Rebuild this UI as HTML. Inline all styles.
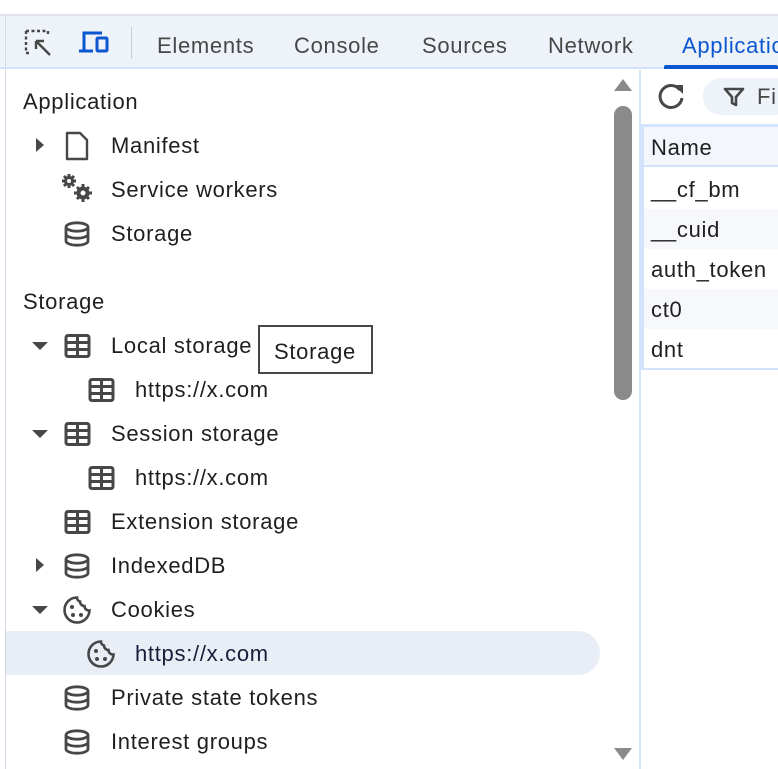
<!DOCTYPE html>
<html><head><meta charset="utf-8"><style>
*{margin:0;padding:0;box-sizing:border-box}
body{width:778px;height:769px;overflow:hidden;background:#fff;font-family:"Liberation Sans","DejaVu Sans",sans-serif;color:#1f1f1f;position:relative;letter-spacing:0.7px}
.a{position:absolute;white-space:nowrap}
.t{font-size:22px;line-height:44px;height:44px}
svg.i{position:absolute}
</style></head><body>
<svg width="0" height="0" style="position:absolute"><defs>
<symbol id="db" viewBox="0 0 26 26"><g fill="none" stroke="#474747" stroke-width="2.8"><ellipse cx="13" cy="6" rx="11" ry="4.2"/><path d="M2 6v14c0 2.4 5 4.2 11 4.2s11-1.8 11-4.2V6M2 13c0 2.4 5 4.2 11 4.2s11-1.8 11-4.2"/></g></symbol>
<symbol id="tb" viewBox="0 0 26 24"><g fill="none" stroke="#474747" stroke-width="3"><rect x="1.5" y="1.5" width="23" height="21" rx="2"/><path d="M1.5 8.5h23M1.5 15.5h23M13 1.5v21"/></g></symbol>
<symbol id="ck" viewBox="0 0 30 30"><g fill="none" stroke="#474747" stroke-width="2.6"><path d="M15 2.5a12.5 12.5 0 1 0 12.5 13 4.5 4.5 0 0 1-5-4.5 4.5 4.5 0 0 1-4.5-4.5A4 4 0 0 1 15 2.5z"/></g><g fill="#474747"><circle cx="10" cy="12" r="2"/><circle cx="11" cy="20" r="2"/><circle cx="19" cy="20" r="2"/></g></symbol>
</defs></svg>

<div class="a" style="left:0;top:14px;width:778px;height:2px;background:#dfe3ea"></div>
<div class="a" style="left:0;top:16px;width:778px;height:53px;background:#eef2f9;border-bottom:2px solid #d3e3fd"></div>
<div class="a" style="left:5px;top:16px;width:1px;height:753px;background:#d3dbe8"></div>
<svg class="i" style="left:24px;top:29px" width="30" height="30" viewBox="0 0 30 30"><g fill="none" stroke="#474747" stroke-width="2.4"><path d="M2 2h22v4M2 2v22h4" stroke-dasharray="3 2.5"/><path d="M12 12l14 14M12 12h8M12 12v8"/></g></svg>
<svg class="i" style="left:78px;top:30px" width="32" height="26" viewBox="0 0 32 26"><g fill="none" stroke="#0b57d0" stroke-width="3"><path d="M6 20V3h18M1 21h14"/><rect x="19" y="8" width="10" height="13" rx="1"/></g></svg>
<div class="a" style="left:131px;top:27px;width:1px;height:32px;background:#c7ccd6"></div>
<div class="a" style="left:157px;top:24px;font-size:22px;line-height:44px;color:#474747">Elements</div>
<div class="a" style="left:294px;top:24px;font-size:22px;line-height:44px;color:#474747">Console</div>
<div class="a" style="left:422px;top:24px;font-size:22px;line-height:44px;color:#474747">Sources</div>
<div class="a" style="left:548px;top:24px;font-size:22px;line-height:44px;color:#474747">Network</div>
<div class="a" style="left:682px;top:24px;font-size:22px;line-height:44px;color:#0b57d0">Application</div>
<div class="a" style="left:664px;top:65px;width:114px;height:4px;background:#0b57d0;border-radius:2px 2px 0 0"></div>

<div class="a t" style="left:23px;top:80px">Application</div>
<div class="a" style="left:36px;top:138px;width:0;height:0;border-top:7px solid transparent;border-bottom:7px solid transparent;border-left:8px solid #474747"></div>
<svg class="i" style="left:64px;top:131px" width="26" height="30" viewBox="0 0 26 30"><path d="M3 2h13l7 7v19H3z" fill="none" stroke="#474747" stroke-width="2.4" stroke-linejoin="round"/></svg>
<div class="a t" style="left:111px;top:124px">Manifest</div>
<svg class="i" style="left:61px;top:173px" width="34" height="32" viewBox="0 0 34 32"><g fill="#474747"><circle cx="8" cy="8" r="5"/><circle cx="22" cy="20" r="6.5"/></g><g stroke="#474747" stroke-width="3"><path d="M8 1v14M1 8h14M3 3l10 10M13 3L3 13M22 11v18M13 20h18M16 14l12 12M28 14L16 26"/></g><g fill="#fff"><circle cx="8" cy="8" r="2"/><circle cx="22" cy="20" r="2.5"/></g></svg>
<div class="a t" style="left:111px;top:168px">Service workers</div>
<svg class="i" style="left:64px;top:221px" width="26" height="26"><use href="#db"/></svg>
<div class="a t" style="left:111px;top:212px">Storage</div>

<div class="a t" style="left:23px;top:280px">Storage</div>
<div class="a" style="left:32px;top:342px;border-left:8px solid transparent;border-right:8px solid transparent;border-top:8px solid #474747"></div>
<svg class="i" style="left:64px;top:334px" width="27" height="24"><use href="#tb"/></svg>
<div class="a t" style="left:111px;top:324px">Local storage</div>
<svg class="i" style="left:88px;top:378px" width="27" height="24"><use href="#tb"/></svg>
<div class="a t" style="left:135px;top:368px">https://x.com</div>
<div class="a" style="left:32px;top:430px;border-left:8px solid transparent;border-right:8px solid transparent;border-top:8px solid #474747"></div>
<svg class="i" style="left:64px;top:422px" width="27" height="24"><use href="#tb"/></svg>
<div class="a t" style="left:111px;top:412px">Session storage</div>
<svg class="i" style="left:88px;top:466px" width="27" height="24"><use href="#tb"/></svg>
<div class="a t" style="left:135px;top:456px">https://x.com</div>
<svg class="i" style="left:64px;top:510px" width="27" height="24"><use href="#tb"/></svg>
<div class="a t" style="left:111px;top:500px">Extension storage</div>
<div class="a" style="left:36px;top:558px;border-top:7px solid transparent;border-bottom:7px solid transparent;border-left:8px solid #474747"></div>
<svg class="i" style="left:64px;top:553px" width="26" height="26"><use href="#db"/></svg>
<div class="a t" style="left:111px;top:544px">IndexedDB</div>
<div class="a" style="left:32px;top:606px;border-left:8px solid transparent;border-right:8px solid transparent;border-top:8px solid #474747"></div>
<svg class="i" style="left:62px;top:595px" width="30" height="30"><use href="#ck"/></svg>
<div class="a t" style="left:111px;top:588px">Cookies</div>
<div class="a" style="left:6px;top:631px;width:594px;height:44px;background:#e9eef6;border-radius:0 22px 22px 0"></div>
<svg class="i" style="left:86px;top:639px" width="30" height="30"><use href="#ck"/></svg>
<div class="a t" style="left:135px;top:632px;color:#1b1c3a">https://x.com</div>
<svg class="i" style="left:64px;top:685px" width="26" height="26"><use href="#db"/></svg>
<div class="a t" style="left:111px;top:676px">Private state tokens</div>
<svg class="i" style="left:64px;top:729px" width="26" height="26"><use href="#db"/></svg>
<div class="a t" style="left:111px;top:720px">Interest groups</div>

<div class="a" style="left:258px;top:325px;width:115px;height:49px;border:2px solid #474747;background:#fff;font-size:22px;line-height:50px;padding-left:14px;color:#1f1f1f">Storage</div>

<div class="a" style="left:614px;top:79px;border-left:9px solid transparent;border-right:9px solid transparent;border-bottom:12px solid #8a8a8a"></div>
<div class="a" style="left:614px;top:106px;width:18px;height:294px;background:#8a8a8a;border-radius:9px"></div>
<div class="a" style="left:614px;top:748px;border-left:9px solid transparent;border-right:9px solid transparent;border-top:12px solid #8a8a8a"></div>
<div class="a" style="left:639px;top:70px;width:2px;height:699px;background:#d3e3fd"></div>

<svg class="i" style="left:655px;top:81px" width="32" height="32" viewBox="0 0 32 32"><g fill="none" stroke="#474747" stroke-width="3"><path d="M25 9A11 11 0 1 0 27 17"/></g><path d="M19 4h9v9z" fill="#474747"/></svg>
<div class="a" style="left:703px;top:78px;width:90px;height:37px;background:#eef2f9;border-radius:18px"></div>
<svg class="i" style="left:723px;top:86px" width="22" height="22" viewBox="0 0 22 22"><path d="M2 3h18l-7 8v8l-4-2v-6z" fill="none" stroke="#474747" stroke-width="2.6" stroke-linejoin="round"/></svg>
<div class="a" style="left:757px;top:75px;font-size:22px;line-height:44px;color:#474747">Fi</div>
<div class="a" style="left:641px;top:124px;width:137px;height:3px;background:#d3e3fd"></div>
<div class="a" style="left:641px;top:127px;width:137px;height:40px;background:#f3f6fc;border-bottom:2px solid #d3e3fd"></div>
<div class="a" style="left:641px;top:127px;width:3px;height:243px;background:#d3e3fd"></div>
<div class="a" style="left:651px;top:126px;font-size:22px;line-height:44px">Name</div>
<div class="a" style="left:644px;top:209px;width:134px;height:40px;background:#f6f8fc"></div>
<div class="a" style="left:644px;top:289px;width:134px;height:40px;background:#f6f8fc"></div>
<div class="a" style="left:641px;top:368px;width:137px;height:2px;background:#d3e3fd"></div>
<div class="a" style="left:651px;top:168px;font-size:22px;line-height:44px">__cf_bm</div>
<div class="a" style="left:651px;top:208px;font-size:22px;line-height:44px">__cuid</div>
<div class="a" style="left:651px;top:248px;font-size:22px;line-height:44px">auth_token</div>
<div class="a" style="left:651px;top:288px;font-size:22px;line-height:44px">ct0</div>
<div class="a" style="left:651px;top:328px;font-size:22px;line-height:44px">dnt</div>
</body></html>
